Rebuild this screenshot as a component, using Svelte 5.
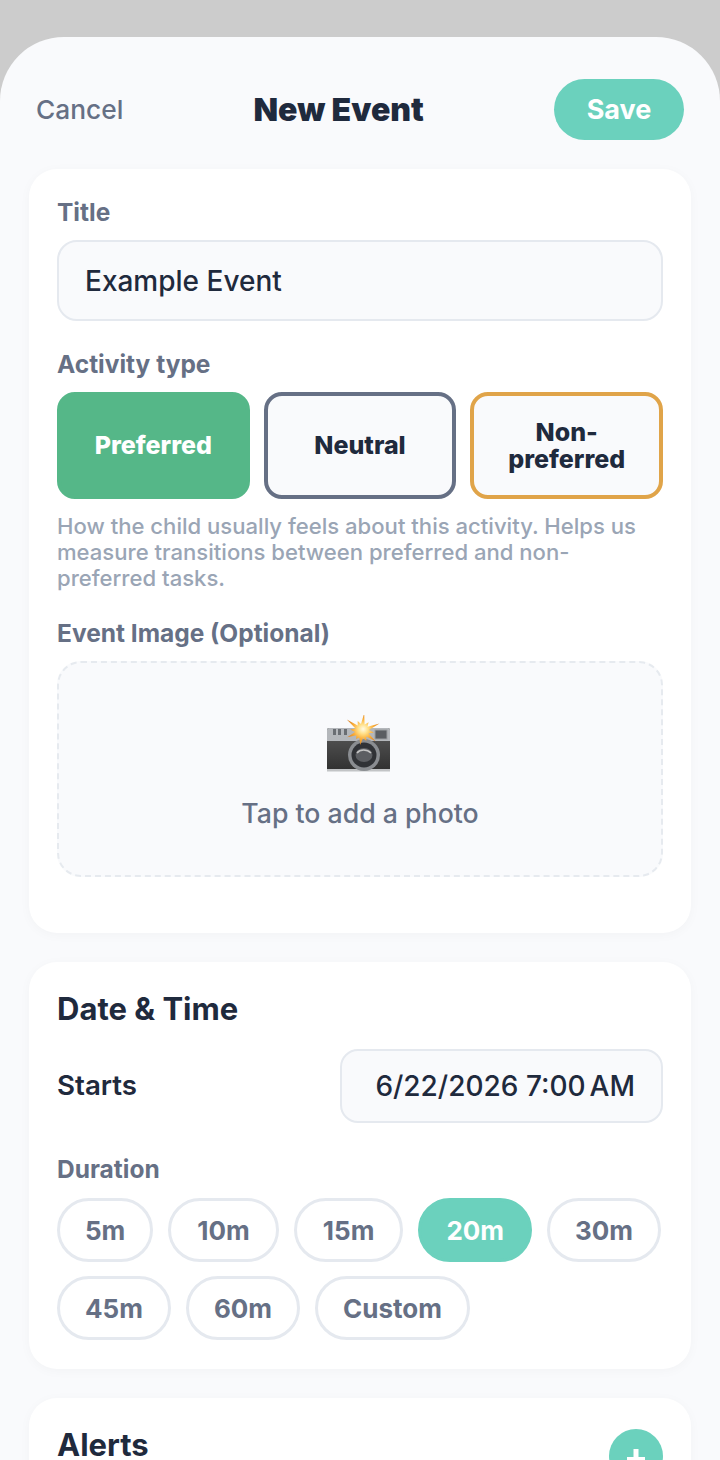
<script>
  const row1 = ['5m', '10m', '15m', '20m', '30m'];
  const row2 = ['45m', '60m', 'Custom'];
  const outer = [18, 11, 19, 12, 17, 11, 14, 10, 16, 12, 19, 11];
  const star = outer
    .flatMap((r, i) => {
      const a = (i / outer.length) * Math.PI * 2 - Math.PI / 2 + 0.12;
      const b = a + Math.PI / outer.length;
      return [
        `${(38 + r * Math.cos(a)).toFixed(1)},${(16 + r * Math.sin(a)).toFixed(1)}`,
        `${(38 + 7 * Math.cos(b)).toFixed(1)},${(16 + 7 * Math.sin(b)).toFixed(1)}`
      ];
    })
    .join(' ');
</script>

<div class="screen">
  <div class="sheet">
    <header class="head">
      <span class="cancel">Cancel</span>
      <h1>New Event</h1>
      <button class="save">Save</button>
    </header>

    <section class="card first">
      <div class="label">Title</div>
      <div class="input">Example Event</div>

      <div class="label mt-type">Activity type</div>
      <div class="types">
        <div class="type preferred">Preferred</div>
        <div class="type neutral">Neutral</div>
        <div class="type non">Non-<br />preferred</div>
      </div>
      <p class="hint">How the child usually feels about this activity. Helps us measure transitions between preferred and non-<br />preferred tasks.</p>

      <div class="label mt-image">Event Image (Optional)</div>
      <div class="drop">
        <svg class="cam" width="70" height="60" viewBox="0 0 70 60" aria-hidden="true">
          <defs>
            <linearGradient id="body" x1="0" y1="0" x2="0" y2="1">
              <stop offset="0" stop-color="#5a5a5a" />
              <stop offset="1" stop-color="#303030" />
            </linearGradient>
            <radialGradient id="flash">
              <stop offset="0" stop-color="#fffbe6" />
              <stop offset=".3" stop-color="#ffe08a" />
              <stop offset=".62" stop-color="#fbb03b" />
              <stop offset="1" stop-color="#dd8524" />
            </radialGradient>
          </defs>
          <rect x="3" y="13" width="63" height="43" rx="2" fill="url(#body)" />
          <path d="M3 26V15a2 2 0 0 1 2-2H64a2 2 0 0 1 2 2V26Z" fill="#b4b7bb" />
          <rect x="3" y="54" width="63" height="2.500" fill="#c2c4c6" />
          <rect x="9" y="14" width="3" height="6" fill="#6a6e73" />
          <rect x="14" y="14" width="3" height="6" fill="#6a6e73" />
          <rect x="20" y="14" width="3" height="6" fill="#6a6e73" />
          <rect x="51" y="15" width="12" height="9" fill="#5b5e62" stroke="#9a9da0" />
          <circle cx="40" cy="40" r="16" fill="#8a8d91" />
          <circle cx="40" cy="40" r="12.500" fill="#303236" />
          <ellipse cx="40" cy="40" rx="8.500" ry="7" fill="#5c5e62" />
          <path d="M33 38c3-4 10-4 14 0" stroke="#c4c4c4" stroke-width="1.500" fill="none" />
          <polygon points={star} fill="url(#flash)" />
        </svg>
        <span class="tap">Tap to add a photo</span>
      </div>
    </section>

    <section class="card second">
      <h2>Date &amp; Time</h2>
      <div class="starts">
        <span class="starts-label">Starts</span>
        <div class="date">6/22/2026 7:00<span class="narrow"> </span>AM</div>
      </div>
      <div class="label mt-dur">Duration</div>
      <div class="chips">
        {#each row1 as c}
          <div class="chip" class:on={c === '20m'} class:tens={c === '10m' || c === '15m'}>{c}</div>
        {/each}
        {#each row2 as c}
          <div class="chip">{c}</div>
        {/each}
      </div>
    </section>

    <section class="card third">
      <h2>Alerts</h2>
      <div class="plus">
        <svg width="54" height="54" viewBox="0 0 54 54" aria-hidden="true">
          <path d="M27 20v21M18 30.500h18" stroke="#fff" stroke-width="5" />
        </svg>
      </div>
    </section>
  </div>
</div>

<style>
  :global(body) { margin: 0; background: #ccc; }
  .screen {
    width: 720px;
    height: 1460px;
    overflow: hidden;
    padding-top: 37px;
    box-sizing: border-box;
    font-family: Inter, "Liberation Sans", sans-serif;
  }
  .sheet {
    background: #f9fafc;
    border-radius: 64px 64px 0 0;
    height: 1423px;
    padding: 0 29px;
    box-sizing: border-box;
  }
  .head {
    display: flex;
    align-items: center;
    justify-content: space-between;
    height: 132px;
    box-sizing: border-box;
    padding: 13px 7px 0 7px;
  }
  .cancel { font-size: 26.300px; color: #667085; font-weight: 500; margin-top: -1px; }
  h1 { margin: -1px 0 0; font-size: 32px; font-weight: 900; color: #1f2a3d; }
  .save {
    width: 130px;
    height: 61px;
    border: 0;
    border-radius: 31px;
    background: #6bd1bd;
    color: #fff;
    font: 700 27px Inter, sans-serif;
  }
  .card {
    background: #fff;
    border-radius: 28px;
    padding: 0 28px;
    margin-bottom: 29px;
    box-shadow: 0 2px 12px rgba(15, 23, 42, .03);
  }
  .first { height: 764px; padding-top: 28px; box-sizing: border-box; }
  .second { height: 407px; padding-top: 28px; box-sizing: border-box; }
  .third { height: 120px; position: relative; padding-top: 28px; box-sizing: border-box; }
  .label { font-size: 24.500px; line-height: 30px; font-weight: 700; color: #667085; }
  .input {
    margin-top: 13px;
    height: 81px;
    box-sizing: border-box;
    border: 2px solid #e5e9ef;
    border-radius: 20px;
    background: #f9fafc;
    padding-left: 26px;
    display: flex;
    align-items: center;
    font-size: 28px;
    font-weight: 500;
    color: #1f2a3d;
  }
  .mt-type { margin-top: 28px; }
  .types { display: flex; gap: 14px; margin-top: 13px; }
  .type {
    flex: 1;
    height: 107px;
    box-sizing: border-box;
    border-radius: 18px;
    display: flex;
    align-items: center;
    justify-content: center;
    text-align: center;
    font-size: 25px;
    line-height: 27px;
    font-weight: 800;
    color: #1f2a3d;
    background: #f9fafc;
    border: 4px solid #667085;
  }
  .preferred { background: #55b788; border-color: #55b788; color: #fff; }
  .non { border-color: #e0a449; }
  .hint {
    margin: 14px 0 0;
    font-size: 22.100px;
    line-height: 26px;
    font-weight: 500;
    color: #9aa5b5;
  }
  .mt-image { margin-top: 27px; }
  .drop {
    margin-top: 13px;
    height: 216px;
    box-sizing: border-box;
    border: 2.500px dashed #e6eaef;
    border-radius: 24px;
    background: #f9fafc;
    display: flex;
    flex-direction: column;
    align-items: center;
    padding-top: 52px;
  }
  .cam { display: block; margin-left: -2px; }
  .tap { margin-top: 22px; font-size: 26.700px; font-weight: 500; color: #667085; }
  h2 { margin: 0; font-size: 31px; line-height: 38px; font-weight: 700; color: #1f2a3d; }
  .starts { display: flex; justify-content: space-between; align-items: center; margin-top: 21px; }
  .starts-label { font-size: 27.700px; font-weight: 600; color: #1f2a3d; margin-top: -2px; }
  .date {
    width: 323px;
    height: 74px;
    box-sizing: border-box;
    border: 2px solid #e5e9ef;
    border-radius: 18px;
    background: #f9fafc;
    display: flex;
    align-items: center;
    justify-content: flex-end;
    padding-right: 26px;
    font-size: 28px;
    font-weight: 500;
    color: #1f2a3d;
    white-space: pre;
  }
  .narrow { width: 4px; }
  .mt-dur { margin-top: 31px; }
  .chips { display: flex; flex-wrap: wrap; gap: 14px 15px; margin-top: 14px; }
  .chip {
    height: 64px;
    box-sizing: border-box;
    border: 3px solid #e5e9ef;
    border-radius: 32px;
    padding: 0 25px;
    display: flex;
    align-items: center;
    font-size: 26px;
    font-weight: 700;
    color: #667085;
  }
  .chip.tens { padding: 0 26px; }
  .chip.on { background: #6bd1bd; border-color: #6bd1bd; color: #fff; }
  .plus {
    position: absolute;
    right: 28px;
    top: 31px;
    width: 54px;
    height: 54px;
    border-radius: 50%;
    background: #6bd1bd;
  }
</style>
